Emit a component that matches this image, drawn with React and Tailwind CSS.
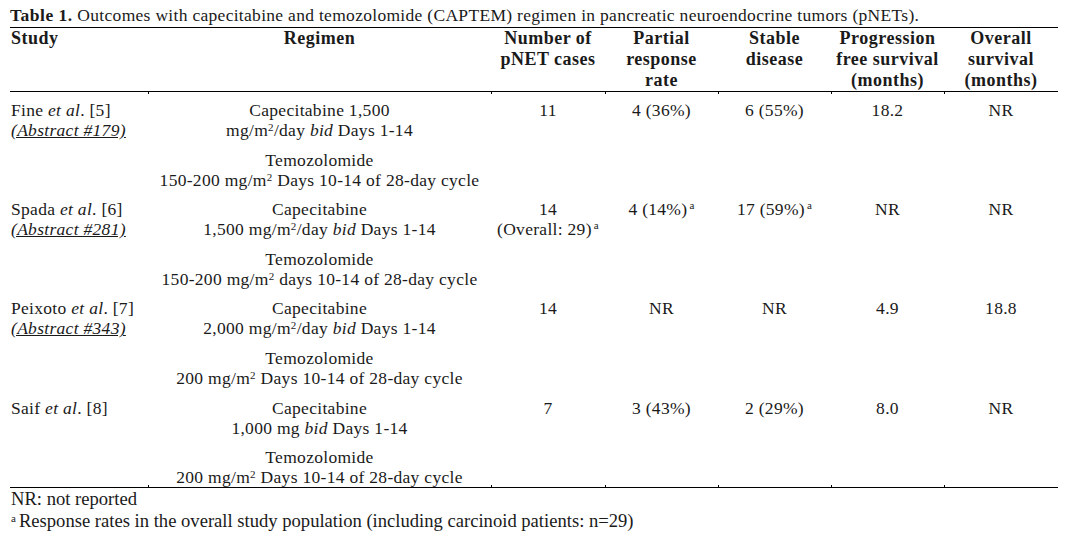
import React from "react";

const COLS = "grid grid-cols-[138px_343px_114px_113px_113px_113px_114px]";
const Sup = ({ children }) => (
  <span className="relative -top-[6px] ml-[2px] text-[11px] leading-none">{children}</span>
);
const M2 = () => (
  <>
    m<span className="relative -top-[5px] text-[11px] leading-none">2</span>
  </>
);

const rows = [
  {
    study: (
      <>
        Fine <i>et al</i>. [5]
      </>
    ),
    abs: "(Abstract #179)",
    cap: [
      <>Capecitabine 1,500</>,
      <>
        mg/<M2 />/day <i>bid</i> Days 1-14
      </>,
    ],
    tem: [<>Temozolomide</>, <>150-200 mg/<M2 /> Days 10-14 of 28-day cycle</>],
    n: [<>11</>],
    pr: <>4 (36%)</>,
    sd: <>6 (55%)</>,
    pfs: "18.2",
    os: "NR",
  },
  {
    study: (
      <>
        Spada <i>et al</i>. [6]
      </>
    ),
    abs: "(Abstract #281)",
    cap: [
      <>Capecitabine</>,
      <>
        1,500 mg/<M2 />/day <i>bid</i> Days 1-14
      </>,
    ],
    tem: [<>Temozolomide</>, <>150-200 mg/<M2 /> days 10-14 of 28-day cycle</>],
    n: [
      <>14</>,
      <>
        (Overall: 29)<Sup>a</Sup>
      </>,
    ],
    pr: (
      <>
        4 (14%)<Sup>a</Sup>
      </>
    ),
    sd: (
      <>
        17 (59%)<Sup>a</Sup>
      </>
    ),
    pfs: "NR",
    os: "NR",
  },
  {
    study: (
      <>
        Peixoto <i>et al</i>. [7]
      </>
    ),
    abs: "(Abstract #343)",
    cap: [
      <>Capecitabine</>,
      <>
        2,000 mg/<M2 />/day <i>bid</i> Days 1-14
      </>,
    ],
    tem: [<>Temozolomide</>, <>200 mg/<M2 /> Days 10-14 of 28-day cycle</>],
    n: [<>14</>],
    pr: <>NR</>,
    sd: <>NR</>,
    pfs: "4.9",
    os: "18.8",
  },
  {
    study: (
      <>
        Saif <i>et al</i>. [8]
      </>
    ),
    abs: null,
    cap: [
      <>Capecitabine</>,
      <>
        1,000 mg <i>bid</i> Days 1-14
      </>,
    ],
    tem: [<>Temozolomide</>, <>200 mg/<M2 /> Days 10-14 of 28-day cycle</>],
    n: [<>7</>],
    pr: <>3 (43%)</>,
    sd: <>2 (29%)</>,
    pfs: "8.0",
    os: "NR",
  },
];

const Ticks = ({ up }) => (
  <div className={`${COLS} h-[2px] ${up ? "-mt-[2px]" : ""}`}>
    {[0, 1, 2, 3, 4, 5, 6].map((i) => (
      <div key={i} className={i === 0 ? "" : "border-l border-black"} />
    ))}
  </div>
);

export default function App() {
  return (
    <div
      className="w-[1069px] h-[542px] bg-white text-[#1a1a1a] text-[17.5px] tracking-[0.3px]"
      style={{ fontFamily: '"Liberation Serif", serif' }}
    >
      <div className="ml-[10px] w-[1048px] pt-[5px]">
        <div className="leading-[21px] whitespace-nowrap">
          <b className="tracking-[0.5px]">Table 1.</b> Outcomes with capecitabine and temozolomide (CAPTEM)
          regimen in pancreatic neuroendocrine tumors (pNETs).
        </div>
        <div className="border-t border-black mt-[1px]" />
        <div className={`${COLS} font-bold leading-[21px] text-center text-[18px] tracking-[0.5px] whitespace-nowrap`}>
          <div className="text-left pl-[1px]">Study</div>
          <div>Regimen</div>
          <div>
            Number of
            <br />
            pNET cases
          </div>
          <div>
            Partial
            <br />
            response
            <br />
            rate
          </div>
          <div>
            Stable
            <br />
            disease
          </div>
          <div>
            Progression
            <br />
            free survival
            <br />
            (months)
          </div>
          <div>
            Overall
            <br />
            survival
            <br />
            (months)
          </div>
        </div>
        <div className="border-t border-black" />
        <Ticks />
        <div className="pt-[6px] leading-[20px] whitespace-nowrap">
          {rows.map((r, idx) => (
            <div key={idx} className={COLS}>
              <div className="pl-[1px]">
                <div>{r.study}</div>
                {r.abs && <div className="italic underline">{r.abs}</div>}
              </div>
              <div className="text-center">
                <div className="mb-[9.6px]">
                  {r.cap.map((c, i) => (
                    <div key={i}>{c}</div>
                  ))}
                </div>
                <div className={idx === rows.length - 1 ? "" : "mb-[9.6px]"}>
                  {r.tem.map((c, i) => (
                    <div key={i}>{c}</div>
                  ))}
                </div>
              </div>
              <div className="text-center">
                {r.n.map((c, i) => (
                  <div key={i}>{c}</div>
                ))}
              </div>
              <div className="text-center">{r.pr}</div>
              <div className="text-center">{r.sd}</div>
              <div className="text-center">{r.pfs}</div>
              <div className="text-center">{r.os}</div>
            </div>
          ))}
        </div>
        <Ticks up />
        <div className="border-t border-black" />
        <div className="text-[18.6px] tracking-normal whitespace-nowrap">
          <div className="pl-[1px] leading-[21px]">NR: not reported</div>
          <div className="pl-[1px] leading-[23px]">
            <span className="relative -top-[5px] text-[11px] mr-[3px]">a</span>Response rates in the
            overall study population (including carcinoid patients: n=29)
          </div>
        </div>
      </div>
    </div>
  );
}
